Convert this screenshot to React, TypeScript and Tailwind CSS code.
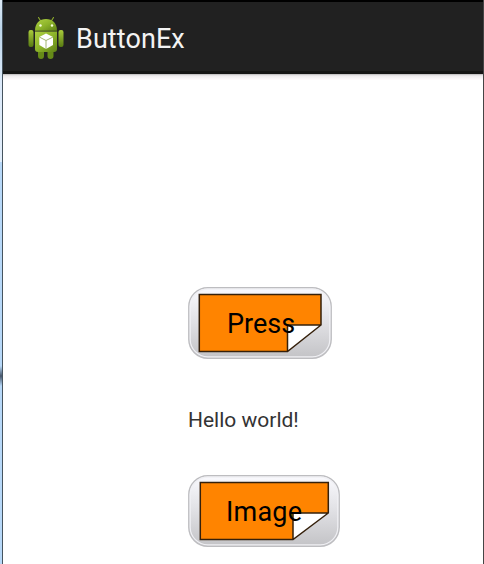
import React from "react";

function AndroidIcon() {
  return (
    <svg width="36" height="44" viewBox="0 0 36 44" className="shrink-0">
      <defs>
        <linearGradient id="body" x1="0" y1="0" x2="1" y2="1">
          <stop offset="0" stopColor="#b0d243" />
          <stop offset="0.5" stopColor="#8db42a" />
          <stop offset="1" stopColor="#5d8015" />
        </linearGradient>
        <linearGradient id="limb" x1="0" y1="0" x2="0" y2="1">
          <stop offset="0" stopColor="#a9cb3b" />
          <stop offset="1" stopColor="#587b12" />
        </linearGradient>
      </defs>
      <path d="M10.5 1.5l2.5 4M25.5 1.5l-2.5 4" stroke="#8fae2c" strokeWidth="1.1" strokeLinecap="round" />
      <path d="M7 14.8C7 7 11.5 3 18 3S29 7 29 14.8z" fill="url(#body)" />
      <circle cx="12.5" cy="9.5" r="1.2" fill="#f6ffdd" />
      <circle cx="24" cy="9.5" r="1.2" fill="#f6ffdd" />
      <rect x="0.5" y="14" width="5" height="17" rx="2.1" fill="url(#limb)" />
      <rect x="30.5" y="14" width="5" height="17" rx="2.1" fill="url(#limb)" />
      <path d="M10 33h6v7q0 3-3 3t-3-3zM19.5 33h6v7q0 3-3 3t-3-3z" fill="#668a18" />
      <path d="M7 15.6h22V33q0 3-3 3H10q-3 0-3-3z" fill="url(#body)" />
      <path d="M18 17.6l7 3.4v7.9L18 33l-6.7-4.1V21z" fill="#fff" />
      <path d="M11.3 21l6.7 3.5 7-3.5M18 24.5V33" fill="none" stroke="#9aae62" strokeWidth="0.9" />
    </svg>
  );
}

interface NoteButtonProps {
  label: string;
  width: number;
  left: number;
  right: number;
  fold: number;
  textClass: string;
}

function NoteButton({ label, width, left, right, fold, textClass }: NoteButtonProps) {
  return (
    <button className="relative block h-[72px] text-left" style={{ width }}>
      <svg width={width} height="72" className="absolute inset-0">
        <defs>
          <linearGradient id={"face" + label} x1="0" y1="0" x2="0" y2="1">
            <stop offset="0" stopColor="#fafafe" />
            <stop offset="0.5" stopColor="#e0e0e4" />
            <stop offset="1" stopColor="#c3c3c6" />
          </linearGradient>
        </defs>
        <rect x="0.8" y="0.8" width={width - 1.6} height="70.4" rx="19" fill={"url(#face" + label + ")"} stroke="#bdbdc0" strokeWidth="1.4" />
        <rect x="2.2" y="2.2" width={width - 4.4} height="67.6" rx="17.6" fill="none" stroke="#f0f0f4" strokeWidth="1.2" />
        <path d={`M${left} 7.5H${right}V38H${fold}V64.5H${left}z`} fill="#ff8400" />
        <path d={`M${fold} 38H${right}L${fold} 64.5z`} fill="#fff" />
        <path d={`M${left} 7.5H${right}V38L${fold} 64.5H${left}zM${fold} 64.5V38H${right}`} fill="none" stroke="#35200b" strokeWidth="1.5" />
      </svg>
      <span className={"relative block pt-px text-[27px] leading-[72px] text-black " + textClass}>{label}</span>
    </button>
  );
}

export default function App() {
  return (
    <div className="flex h-[564px] w-[484px] overflow-hidden bg-white font-['Roboto',sans-serif]">
      <div className="flex w-[2px] shrink-0 flex-col">
        <div className="h-[162px] bg-[linear-gradient(#dce9f5,#bcd5ea_18%,#dceafa_50%,#e2eefb)]" />
        <div className="h-[204px] bg-[#b7d8f8]" />
        <div className="h-[20px] bg-[linear-gradient(#b7d8f8,#46566b,#b7d8f8)]" />
        <div className="grow bg-[#b7d8f8]" />
      </div>
      <div className="w-px shrink-0 bg-[#46545f]" />
      <main className="flex w-[480px] shrink-0 flex-col">
        <header className="flex h-[74px] shrink-0 items-start border-t-2 border-b-[3px] border-t-black border-b-[#151515] bg-[#212121]">
          <div className="flex pt-[14px] pl-[25px]">
            <AndroidIcon />
            <h1 className="ml-[12px] pt-px text-[27px] leading-[44px] tracking-[0.08px] text-[#f3f3f3]">ButtonEx</h1>
          </div>
        </header>
        <div className="h-[6px] shrink-0 bg-[linear-gradient(#b8b6b7,#eeecee_30%,#fffcfe)]" />
        <section className="flex flex-col items-start pt-[207px] pl-[185px]">
          <NoteButton label="Press" width={144} left={11.3} right={133} fold={99.5} textClass="pl-[39px]" />
          <p className="mt-[45px] h-[32px] text-[21px] leading-[32px] text-[#333]">Hello world!</p>
          <div className="mt-[39px]">
            <NoteButton label="Image" width={152} left={12.3} right={140.3} fold={105} textClass="pl-[38px] tracking-[0.2px]" />
          </div>
        </section>
      </main>
      <div className="w-px shrink-0 bg-[#454545]" />
    </div>
  );
}
